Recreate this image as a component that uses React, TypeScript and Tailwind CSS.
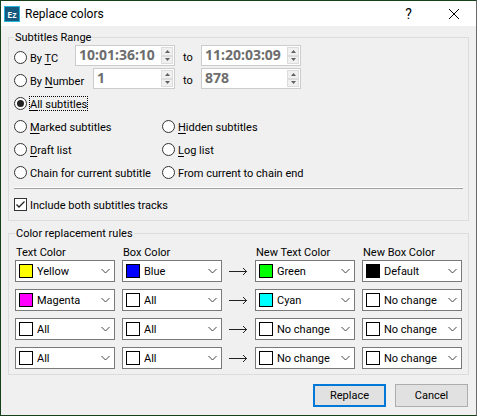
import React from "react";

type Hotkey = { before?: string; hotkey?: string; after: string };

function Caption({ before = "", hotkey = "", after }: Hotkey) {
  return (
    <span className="pt-[2px] whitespace-pre">
      {before}
      {hotkey && <span className="underline underline-offset-2">{hotkey}</span>}
      {after}
    </span>
  );
}

type RadioProps = Hotkey & { checked?: boolean; focused?: boolean };

function RadioOption({ checked, focused, ...caption }: RadioProps) {
  return (
    <label className="flex items-center gap-[2px] pt-[6px]">
      <input
        type="radio"
        name="range"
        defaultChecked={checked}
        className="m-0 grid size-[13px] shrink-0 appearance-none place-items-center rounded-full border border-[#333] bg-white before:size-[7px] before:rounded-full checked:before:bg-[#222]"
      />
      <span
        className={
          focused
            ? "flex h-[15px] items-center border border-dotted border-black"
            : "flex h-[15px] items-center border border-transparent"
        }
      >
        <Caption {...caption} />
      </span>
    </label>
  );
}

function SpinBox({ label, value, className }: { label: string; value: string; className: string }) {
  const step =
    "flex h-[9px] w-3 items-center justify-center border border-[#dcdcdc] bg-[#f0f0f0]";
  return (
    <div className={`mt-px flex h-[21px] border border-[#ccc] bg-white p-px ${className}`}>
      <input
        type="text"
        aria-label={label}
        defaultValue={value}
        className="h-4 w-0 min-w-0 flex-1 bg-transparent pl-[2px] font-['Noto_Sans',sans-serif] text-[14px] leading-4 font-bold text-[#6d6d6d] outline-none"
      />
      <div className="flex flex-col justify-between">
        <button type="button" aria-label={`${label} up`} className={step}>
          <svg width="5" height="3" viewBox="0 0 5 3" fill="#606060">
            <path d="M0 3 2.5 0 5 3z" />
          </svg>
        </button>
        <button type="button" aria-label={`${label} down`} className={step}>
          <svg width="5" height="3" viewBox="0 0 5 3" fill="#606060">
            <path d="M0 0 2.5 3 5 0z" />
          </svg>
        </button>
      </div>
    </div>
  );
}

type Choice = { text: string; swatch: string };

function ColorSelect({ label, choice }: { label: string; choice: Choice }) {
  return (
    <div className="flex h-[22px] min-w-0 items-center border border-[#7a7a7a] bg-white pr-1 pl-[3px]">
      <span className={`size-[14px] shrink-0 border border-black ${choice.swatch}`} />
      <select
        aria-label={label}
        defaultValue={choice.text}
        className="h-5 w-0 min-w-0 flex-1 appearance-none bg-transparent pl-1 outline-none"
      >
        <option>{choice.text}</option>
      </select>
      <svg width="9" height="6" viewBox="0 0 9 6" fill="none" stroke="#444" className="shrink-0">
        <path d="M.5 1 4.5 5 8.5 1" />
      </svg>
    </div>
  );
}

const all: Choice = { text: "All", swatch: "bg-white" };
const noChange: Choice = { text: "No change", swatch: "bg-white" };

const rules: Choice[][] = [
  [
    { text: "Yellow", swatch: "bg-[#ff0]" },
    { text: "Blue", swatch: "bg-[#00f]" },
    { text: "Green", swatch: "bg-[#0f0]" },
    { text: "Default", swatch: "bg-black" },
  ],
  [{ text: "Magenta", swatch: "bg-[#f0f]" }, all, { text: "Cyan", swatch: "bg-[#0ff]" }, noChange],
  [all, all, noChange, noChange],
  [all, all, noChange, noChange],
];

const columns = ["Text Color", "Box Color", "New Text Color", "New Box Color"];

function Arrow() {
  return (
    <svg width="19" height="9" viewBox="0 0 19 9" fill="none" stroke="#222" className="mx-auto self-center">
      <path d="M0 4.5H18M14 1 17.5 4.5 14 8" />
    </svg>
  );
}

export default function App() {
  const ruleGrid = "grid grid-cols-[1fr_1fr_19px_1fr_1fr] gap-x-[7px]";
  const row = "flex h-[23px] items-start";
  const group = "min-w-0 border border-[#dcdcdc]";
  const legend = "px-px pt-[2px] leading-3";
  return (
    <div className="flex min-h-screen flex-col border border-t-[#16401c] border-r-[#6a6a6a] border-b-[#16401c] border-l-[#16401c] bg-[#f0f0f0] font-['Roboto',sans-serif] text-[11px] leading-[13px] text-black">
      <header className="flex h-[25px] shrink-0 items-center bg-white pl-[3px]">
        <svg width="16" height="16" viewBox="0 0 16 16">
          <rect x=".5" y=".5" width="15" height="15" fill="#155a7c" stroke="#25b5dc" />
          <text x="8" y="12" textAnchor="middle" fontSize="9" fontWeight="600" fill="#fff" fontFamily="Noto Sans">
            Ez
          </text>
        </svg>
        <h1 className="flex-1 pl-[5px] text-[12px] leading-4">Replace colors</h1>
        <button type="button" aria-label="Help" className="w-[45px] text-[14px] leading-4">
          ?
        </button>
        <button type="button" aria-label="Close" className="flex w-[45px] justify-center">
          <svg width="10" height="10" viewBox="0 0 10 10" stroke="#000">
            <path d="M0 0 10 10M10 0 0 10" />
          </svg>
        </button>
      </header>

      <main className="px-[7px] pt-1">
        <fieldset className={`${group} px-[5px] pb-[9px]`}>
          <legend className={legend}>Subtitles Range</legend>
          <div className={row}>
            <div className="w-[61px]">
              <RadioOption before="By " hotkey="T" after="C" />
            </div>
            <SpinBox label="Start timecode" value="10:01:36:10" className="w-[100px]" />
            <span className="w-[26px] pt-[7px] text-center">to</span>
            <SpinBox label="End timecode" value="11:20:03:09" className="w-[100px]" />
          </div>
          <div className={row}>
            <div className="w-[79px]">
              <RadioOption before="By " hotkey="N" after="umber" />
            </div>
            <SpinBox label="First number" value="1" className="w-[82px]" />
            <span className="w-[26px] pt-[7px] text-center">to</span>
            <SpinBox label="Last number" value="878" className="w-[100px]" />
          </div>
          <div className={row}>
            <RadioOption hotkey="A" after="ll subtitles" checked focused />
          </div>
          <div className="grid grid-cols-[148px_1fr]">
            <div className={row}><RadioOption hotkey="M" after="arked subtitles" /></div>
            <div className={row}><RadioOption hotkey="H" after="idden subtitles" /></div>
            <div className={row}><RadioOption hotkey="D" after="raft list" /></div>
            <div className={row}><RadioOption hotkey="L" after="og list" /></div>
            <div className={row}><RadioOption after="Chain for current subtitle" /></div>
            <div className={row}><RadioOption after="From current to chain end" /></div>
          </div>
          <hr className="mt-[5px] h-[2px] border-t border-b border-t-white border-b-[#a0a0a0]" />
          <label className="mt-[9px] flex h-[13px] items-center gap-[3px]">
            <span className="grid size-[13px] place-items-center">
              <input
                type="checkbox"
                defaultChecked
                className="peer col-start-1 row-start-1 m-0 size-[13px] appearance-none border border-[#333] bg-white"
              />
              <svg
                width="11"
                height="11"
                viewBox="0 0 11 11"
                fill="none"
                stroke="#222"
                strokeWidth="1.3"
                className="pointer-events-none invisible z-10 col-start-1 row-start-1 peer-checked:visible"
              >
                <path d="M1.5 5.5 4 8 9.5 2.5" />
              </svg>
            </span>
            <span className="pt-[2px]">Include both subtitles tracks</span>
          </label>
        </fieldset>

        <fieldset className={`${group} mt-[5px] px-[6px] pb-[5px]`}>
          <legend className={legend}>Color replacement rules</legend>
          <div className={`${ruleGrid} pt-[6px] leading-[14px]`}>
            {columns.map((c, i) => (
              <span key={c} className={i === 2 ? "col-start-4 pl-px whitespace-nowrap" : "pl-px whitespace-nowrap"}>
                {c}
              </span>
            ))}
          </div>
          <div className={`${ruleGrid} gap-y-[7px]`}>
            {rules.map((rule, r) => (
              <React.Fragment key={r}>
                <ColorSelect label={`${columns[0]} ${r + 1}`} choice={rule[0]} />
                <ColorSelect label={`${columns[1]} ${r + 1}`} choice={rule[1]} />
                <Arrow />
                <ColorSelect label={`${columns[2]} ${r + 1}`} choice={rule[2]} />
                <ColorSelect label={`${columns[3]} ${r + 1}`} choice={rule[3]} />
              </React.Fragment>
            ))}
          </div>
        </fieldset>

        <div className="mt-[9px] flex justify-end gap-[9px] pr-px">
          <button type="button" className="h-[23px] w-[73px] border-2 border-[#0078d7] bg-[#e1e1e1]">
            Replace
          </button>
          <button type="button" className="h-[23px] w-[73px] border border-[#adadad] bg-[#e1e1e1]">
            Cancel
          </button>
        </div>
      </main>
    </div>
  );
}
